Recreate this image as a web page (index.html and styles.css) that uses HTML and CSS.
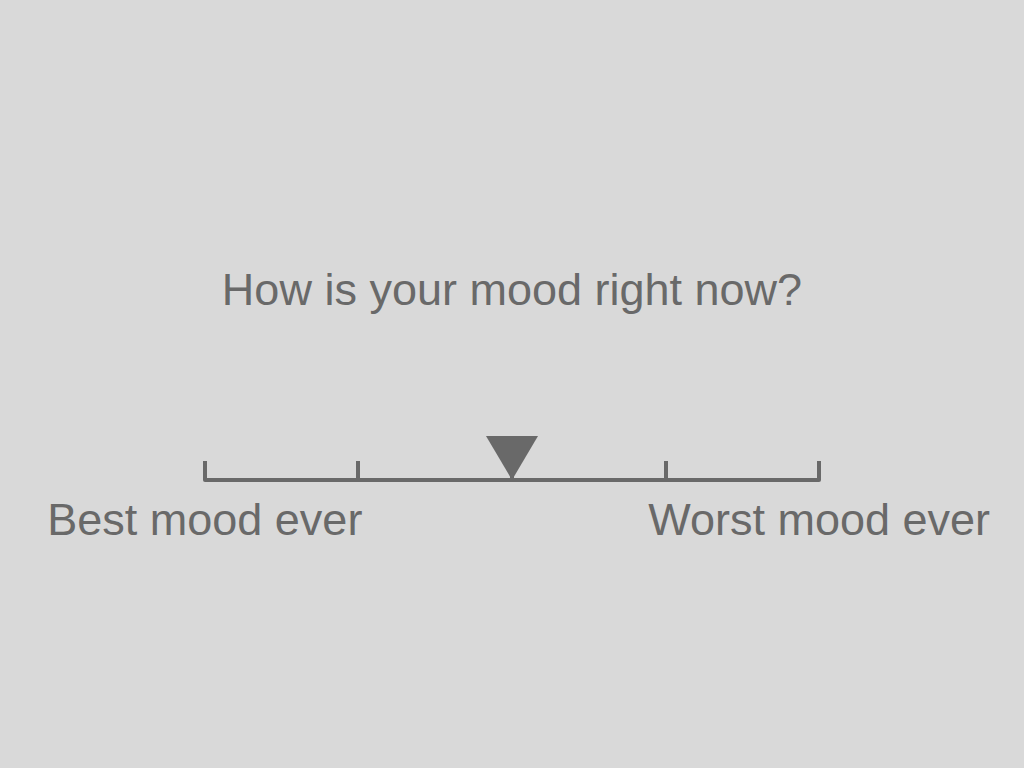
FILE: index.html
```html
<!DOCTYPE html>
<html lang="en">
<head>
<meta charset="utf-8">
<meta name="viewport" content="width=device-width, initial-scale=1">
<title>Mood rating</title>
<link rel="stylesheet" href="styles.css">
</head>
<body>
<main class="rating">
  <h1 class="question"><label for="mood">How is your mood right now?</label></h1>
  <div class="scale">
    <div class="ticks" aria-hidden="true">
      <span class="tick"></span>
      <span class="tick"></span>
      <span class="tick"></span>
      <span class="tick"></span>
      <span class="tick"></span>
    </div>
    <input class="slider" id="mood" type="range" min="0" max="100" value="50" aria-describedby="low high">
  </div>
  <div class="labels">
    <span class="label" id="low">Best mood ever</span>
    <span class="label" id="high">Worst mood ever</span>
  </div>
</main>
</body>
</html>
```

FILE: styles.css
```css
* {
  box-sizing: border-box;
}

body {
  margin: 0;
  min-height: 100vh;
  background: #d9d9d9;
  color: #696969;
  font-family: "Liberation Sans", Arial, sans-serif;
}

.rating {
  padding-top: 264px;
}

.question {
  margin: 0;
  font-size: 45px;
  font-weight: 400;
  line-height: 52px;
  text-align: center;
}

/* The scale covers the middle 60% of the window. */
.scale {
  display: grid;
  align-items: end;
  margin: 120px 20% 0;
}

.ticks,
.slider {
  grid-area: 1 / 1;
}

.ticks {
  display: flex;
  justify-content: space-between;
  margin: 0 -2px;
  border-bottom: 4px solid #696969;
  border-radius: 0 0 2px 2px;
}

.tick {
  width: 4px;
  height: 17px;
  background: #696969;
}

/* Wider than the scale by half a marker on each side. */
.slider {
  appearance: none;
  -webkit-appearance: none;
  width: auto;
  height: 44px;
  margin: 0 -26px 2px;
  background: transparent;
  cursor: pointer;
}

.slider::-webkit-slider-thumb {
  -webkit-appearance: none;
  width: 52px;
  height: 44px;
  background: #696969;
  clip-path: polygon(0 0, 100% 0, 50% 100%);
}

.slider::-moz-range-thumb {
  width: 52px;
  height: 44px;
  border: 0;
  border-radius: 0;
  background: #696969;
  clip-path: polygon(0 0, 100% 0, 50% 100%);
}

/* Each label is centred under its end of the scale. */
.labels {
  display: grid;
  grid-template-columns: 40% 40%;
  justify-content: space-between;
  margin-top: 12px;
  font-size: 45px;
  line-height: 52px;
  text-align: center;
}
```
